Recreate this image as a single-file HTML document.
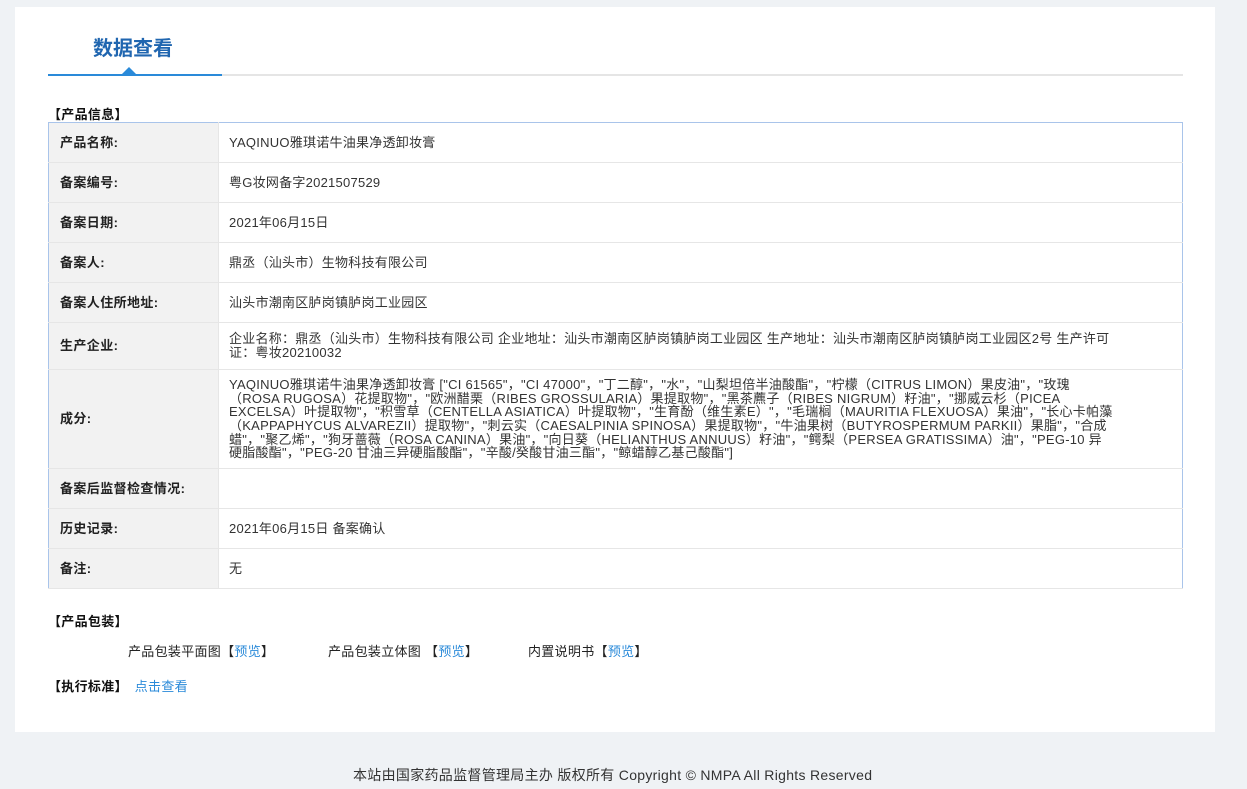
<!DOCTYPE html>
<html><head><meta charset="utf-8"><style>
*{margin:0;padding:0;box-sizing:border-box}
body{width:1247px;height:789px;background:#eff2f5;font-family:"Liberation Sans","Noto Sans CJK SC",sans-serif;font-size:13px;color:#333;position:relative;overflow:hidden}
.panel{position:absolute;left:15px;top:7px;width:1200px;height:725px;background:#fff}
.a{position:absolute;white-space:nowrap}
.title{left:93px;top:32px;font-size:20px;font-weight:bold;color:#2066b0}
.line1{left:48px;top:74px;width:174px;height:2px;background:#2a8ad9}
.line2{left:222px;top:74px;width:961px;height:2px;background:#e5e5e5}
.tri{left:122px;top:67px;width:0;height:0;border-left:7px solid transparent;border-right:7px solid transparent;border-bottom:7px solid #2a8ad9}
.h{font-weight:bold;color:#111;letter-spacing:0.3px}
table{position:absolute;left:48px;top:122px;width:1135px;border-collapse:collapse;border:1px solid #a9c4ea}
td{border-bottom:1px solid #e6e6e6;vertical-align:middle;line-height:13.6px}
td.l{width:170px;background:#f2f2f2;font-weight:bold;padding-left:11px;color:#222;border-right:1px solid #e6e6e6;letter-spacing:0.4px}
td.v{padding-left:10px;color:#333;letter-spacing:0.25px}
.blue{color:#2a8ad9}
</style></head><body>
<div class="panel"></div>
<div class="a title">数据查看</div>
<div class="a line1"></div><div class="a line2"></div><div class="a tri"></div>
<div class="a h" style="left:48px;top:104px">【产品信息】</div>
<table>
<tr style="height:40px"><td class="l">产品名称:</td><td class="v">YAQINUO雅琪诺牛油果净透卸妆膏</td></tr>
<tr style="height:40px"><td class="l">备案编号:</td><td class="v">粤G妆网备字2021507529</td></tr>
<tr style="height:40px"><td class="l">备案日期:</td><td class="v">2021年06月15日</td></tr>
<tr style="height:40px"><td class="l">备案人:</td><td class="v">鼎丞（汕头市）生物科技有限公司</td></tr>
<tr style="height:40px"><td class="l">备案人住所地址:</td><td class="v">汕头市潮南区胪岗镇胪岗工业园区</td></tr>
<tr style="height:47px"><td class="l">生产企业:</td><td class="v">企业名称：鼎丞（汕头市）生物科技有限公司 企业地址：汕头市潮南区胪岗镇胪岗工业园区 生产地址：汕头市潮南区胪岗镇胪岗工业园区2号 生产许可<br>证：粤妆20210032</td></tr>
<tr style="height:99px"><td class="l">成分:</td><td class="v">YAQINUO雅琪诺牛油果净透卸妆膏 ["CI 61565"，"CI 47000"，"丁二醇"，"水"，"山梨坦倍半油酸酯"，"柠檬（CITRUS LIMON）果皮油"，"玫瑰<br>（ROSA RUGOSA）花提取物"，"欧洲醋栗（RIBES GROSSULARIA）果提取物"，"黑茶藨子（RIBES NIGRUM）籽油"，"挪威云杉（PICEA<br>EXCELSA）叶提取物"，"积雪草（CENTELLA ASIATICA）叶提取物"，"生育酚（维生素E）"，"毛瑞榈（MAURITIA FLEXUOSA）果油"，"长心卡帕藻<br>（KAPPAPHYCUS ALVAREZII）提取物"，"刺云实（CAESALPINIA SPINOSA）果提取物"，"牛油果树（BUTYROSPERMUM PARKII）果脂"，"合成<br>蜡"，"聚乙烯"，"狗牙蔷薇（ROSA CANINA）果油"，"向日葵（HELIANTHUS ANNUUS）籽油"，"鳄梨（PERSEA GRATISSIMA）油"，"PEG-10 异<br>硬脂酸酯"，"PEG-20 甘油三异硬脂酸酯"，"辛酸/癸酸甘油三酯"，"鲸蜡醇乙基己酸酯"]</td></tr>
<tr style="height:40px"><td class="l">备案后监督检查情况:</td><td class="v"></td></tr>
<tr style="height:40px"><td class="l">历史记录:</td><td class="v">2021年06月15日 备案确认</td></tr>
<tr style="height:40px"><td class="l">备注:</td><td class="v">无</td></tr>
</table>
<div class="a h" style="left:48px;top:611px">【产品包装】</div>
<div class="a" style="left:128px;top:641px;color:#222;letter-spacing:0.3px">产品包装平面图【<span class="blue">预览</span>】</div>
<div class="a" style="left:328px;top:641px;color:#222;letter-spacing:0.3px">产品包装立体图 【<span class="blue">预览</span>】</div>
<div class="a" style="left:528px;top:641px;color:#222;letter-spacing:0.3px">内置说明书【<span class="blue">预览</span>】</div>
<div class="a h" style="left:48px;top:676px">【执行标准】 <span class="blue" style="font-weight:normal;margin-left:3px">点击查看</span></div>
<div class="a" style="left:353px;top:765px;font-size:14px;color:#333;letter-spacing:0.3px">本站由国家药品监督管理局主办 版权所有 Copyright © NMPA All Rights Reserved</div>
</body></html>
